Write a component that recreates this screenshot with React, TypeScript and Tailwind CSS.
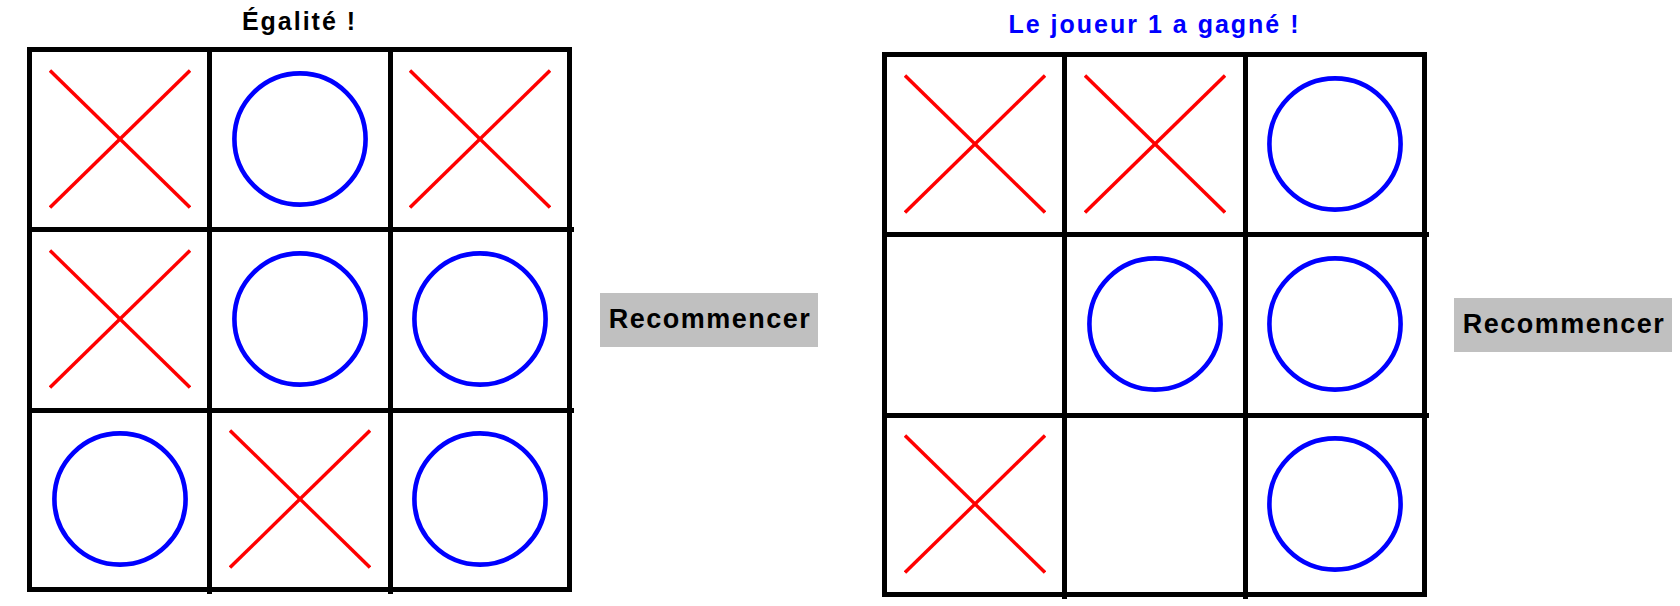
import React from "react";

type Cell = "X" | "O" | "";

function Mark({ v }: { v: Cell }) {
  if (v === "X") {
    return (
      <svg width="142" height="140" viewBox="0 0 142 140" className="block">
        <line x1="1" y1="1.5" x2="141" y2="138.5" stroke="#ff0000" strokeWidth="3.4" />
        <line x1="141" y1="1.5" x2="1" y2="138.5" stroke="#ff0000" strokeWidth="3.4" />
      </svg>
    );
  }
  if (v === "O") {
    return (
      <svg width="142" height="140" viewBox="0 0 142 140" className="block">
        <circle cx="71" cy="70" r="65.6" fill="none" stroke="#0000ff" strokeWidth="4.6" />
      </svg>
    );
  }
  return null;
}

function Board({ cells }: { cells: Cell[] }) {
  return (
    <div className="relative h-[545px] w-[545px]">
      <div className="grid h-[545px] w-[545px] grid-cols-[175px_176px_174px] grid-rows-[175px_176px_174px] gap-[5px] bg-black p-[5px]">
        {cells.map((c, i) => (
          <div key={i} className="flex items-center justify-center bg-white pb-[2px]">
            <Mark v={c} />
          </div>
        ))}
      </div>
      <span className="absolute left-[180px] top-[545px] h-[2px] w-[5px] bg-black" />
      <span className="absolute left-[361px] top-[545px] h-[2px] w-[5px] bg-black" />
      <span className="absolute left-[545px] top-[180px] h-[5px] w-[2px] bg-black" />
      <span className="absolute left-[545px] top-[361px] h-[5px] w-[2px] bg-black" />
    </div>
  );
}

function Game({
  title,
  titleClass,
  cells,
  btnGap,
  topPad,
  titleMb,
}: {
  title: string;
  titleClass: string;
  cells: Cell[];
  btnGap: string;
  topPad: string;
  titleMb: string;
}) {
  return (
    <div className={`grid grid-cols-[545px_auto] grid-rows-[auto_545px] ${topPad}`}>
      <h2
        className={`col-start-1 row-start-1 text-center text-[25px] font-bold leading-[30px] tracking-[2px] ${titleClass} ${titleMb}`}
      >
        {title}
      </h2>
      <div className="col-start-1 row-start-2">
        <Board cells={cells} />
      </div>
      <button
        className={`col-start-2 row-start-2 flex h-[54px] w-[218px] items-center justify-center self-center bg-[#c0c0c0] pl-[2px] text-[27px] font-bold leading-none tracking-[1.5px] text-black ${btnGap}`}
      >
        Recommencer
      </button>
    </div>
  );
}

export default function App() {
  const left: Cell[] = ["X", "O", "X", "X", "O", "O", "O", "X", "O"];
  const right: Cell[] = ["X", "X", "O", "", "O", "O", "X", "", "O"];
  return (
    <div className="flex h-[606px] w-[1680px] items-start bg-white pl-[27px] pt-[6px] font-['Liberation_Sans',Arial,Helvetica,sans-serif] text-black">
      <Game
        title="Égalité !"
        titleClass="text-black"
        cells={left}
        btnGap="ml-[28px]"
        topPad=""
        titleMb="mb-[11px]"
      />
      <div className="ml-[64px]">
        <Game
          title="Le joueur 1 a gagné !"
          titleClass="text-[#0000ff]"
          cells={right}
          btnGap="ml-[27px]"
          topPad="pt-[3px]"
          titleMb="mb-[13px]"
        />
      </div>
    </div>
  );
}
